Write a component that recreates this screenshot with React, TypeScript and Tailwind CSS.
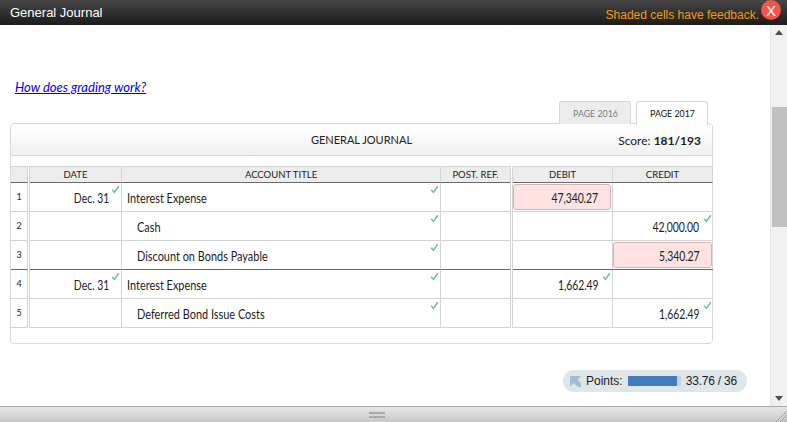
import React from "react";

type Row = {
  num: number;
  date?: string;
  account: string;
  indent?: boolean;
  debit?: string;
  credit?: string;
  shaded?: "debit" | "credit";
  debitCheck?: boolean;
  creditCheck?: boolean;
  divider?: boolean;
};

const rows: Row[] = [
  { num: 1, date: "Dec. 31", account: "Interest Expense", debit: "47,340.27", shaded: "debit" },
  { num: 2, account: "Cash", indent: true, credit: "42,000.00", creditCheck: true },
  { num: 3, account: "Discount on Bonds Payable", indent: true, credit: "5,340.27", shaded: "credit", divider: true },
  { num: 4, date: "Dec. 31", account: "Interest Expense", debit: "1,662.49", debitCheck: true },
  { num: 5, account: "Deferred Bond Issue Costs", indent: true, credit: "1,662.49", creditCheck: true },
];

const gridCols = "grid grid-cols-[17px_2px_92px_319px_70px_2px_100px_100px]";

const Check = () => (
  <svg className="absolute top-[2px] right-[1px]" width="9" height="9" viewBox="0 0 9 9" fill="none">
    <path d="M1.2 4.8 L3.4 7.4 L7.8 1.2" stroke="#62c0a0" strokeWidth="1.5" />
  </svg>
);

const HeadCell = ({ children }: { children?: React.ReactNode }) => (
  <div className="h-[17px] bg-[#ececec] border-t border-r border-[#d4d4d4] border-b border-b-[#6b6b6b] flex items-center justify-center text-[9.5px] leading-none text-[#222]">
    {children}
  </div>
);

const MoneyCell = ({ value, shaded, check, last }: { value?: string; shaded?: boolean; check?: boolean; last?: boolean }) => (
  <div className={`relative pr-[14px] flex items-center justify-end pt-[3px] ${last ? "" : "border-r border-[#d4d4d4]"}`}>
    {shaded && <div className="absolute left-0 right-[1px] top-[1px] bottom-[1px] rounded-[3px] bg-[#ffe3e3] border border-[#d3b3b3]" />}
    <span className="relative inline-block origin-right scale-x-[0.8] tracking-[-0.1px]">{value}</span>
    {check && <Check />}
  </div>
);

const JournalRow = ({ row }: { row: Row }) => {
  const line = row.divider ? "border-b-[#6b6b6b]" : "border-b-[#d4d4d4]";
  const cell = `h-[29px] border-b ${line}`;
  return (
    <div className={`${gridCols} text-[13px] text-[#1c1c1c]`}>
      <div className={`${cell} border-r border-r-[#d4d4d4] flex items-center justify-center text-[9px] text-[#222]`}>{row.num}</div>
      <div className="border-r border-r-[#d4d4d4]" />
      <div className={`${cell} relative border-r border-r-[#d4d4d4] pr-[12px] pt-[3px] flex items-center justify-end`}>
        <span className="inline-block origin-right scale-x-[0.8]">{row.date}</span>
        {row.date && <Check />}
      </div>
      <div className={`${cell} relative border-r border-r-[#d4d4d4] pt-[3px] flex items-center ${row.indent ? "pl-[15px]" : "pl-[5px]"}`}>
        <span className="inline-block origin-left scale-x-[0.84]">{row.account}</span>
        <Check />
      </div>
      <div className={`${cell} border-r border-r-[#d4d4d4]`} />
      <div className="border-r border-r-[#d4d4d4]" />
      <div className={cell + " grid"}>
        <MoneyCell value={row.debit} shaded={row.shaded === "debit"} check={row.debitCheck} />
      </div>
      <div className={cell + " grid"}>
        <MoneyCell value={row.credit} shaded={row.shaded === "credit"} check={row.creditCheck} last />
      </div>
    </div>
  );
};

export default function App() {
  return (
    <div className="w-[787px] h-[422px] flex flex-col overflow-hidden bg-white font-['Lato','Liberation_Sans',sans-serif]">
      {/* title bar */}
      <div className="h-[25px] relative flex items-center justify-between pl-[10px] pr-[28px] bg-gradient-to-b from-[#474747] to-[#1c1c1c] font-['Liberation_Sans',sans-serif]">
        <span className="text-[13px] text-white">General Journal</span>
        <span className="text-[12px] text-[#f39c12] pt-[5px]">Shaded cells have feedback.</span>
        <div className="absolute right-[6px] top-0 w-[20px] h-[20px] rounded-full bg-[#f0564a] flex items-center justify-center text-[15px] leading-none text-white">
          X
        </div>
      </div>

      <div className="flex-1 flex min-h-0">
        <div className="flex-1 pl-[10px] pr-[57px] pt-[54px] border-r border-[#e6e6e6]">
          <a href="#" className="block ml-[5px] h-[16px] text-[13px] leading-[16px] italic text-[#0000ee] underline">
            How does grading work?
          </a>
          {/* tabs */}
          <div className="flex justify-end gap-[5px] mt-[6px] pr-[5px] h-[23px] text-[10px]">
            <div className="w-[72px] h-[23px] flex items-center justify-center rounded-t-[3px] border border-b-0 border-[#d6d6d6] bg-[#ececec] text-[#7d7d7d]">
              <span className="inline-block scale-x-[0.88]">PAGE 2016</span>
            </div>
            <div className="w-[72px] h-[24px] flex items-center justify-center rounded-t-[3px] border border-b-0 border-[#d6d6d6] bg-white text-[#111] relative z-10">
              <span className="inline-block scale-x-[0.88]">PAGE 2017</span>
            </div>
          </div>
          {/* journal card */}
          <div className="h-[221px] w-[703px] -mt-[1px] rounded-[4px] border border-[#d8d8d8] bg-white">
            <div className="relative h-[32px] pt-[2px] flex items-center justify-center rounded-t-[4px] border-b border-[#d8d8d8] bg-gradient-to-b from-white to-[#f1f1f1] text-[11px] text-[#222]">
              GENERAL JOURNAL
              <span className="absolute right-[11px] text-[12px] text-[#222]">
                Score: <span className="font-bold">181/193</span>
              </span>
            </div>
            <div className="h-[10px]" />
            <div className={gridCols}>
              <HeadCell />
              <div className="h-[17px] border-r border-[#d4d4d4]" />
              <HeadCell>DATE</HeadCell>
              <HeadCell>ACCOUNT TITLE</HeadCell>
              <HeadCell>POST. REF.</HeadCell>
              <div className="h-[17px] border-r border-[#d4d4d4]" />
              <HeadCell>DEBIT</HeadCell>
              <HeadCell>CREDIT</HeadCell>
            </div>
            {rows.map((row) => (
              <JournalRow key={row.num} row={row} />
            ))}
          </div>
          {/* points */}
          <div className="flex justify-end mt-[26px] -mr-[34px]">
            <div className="w-[184px] h-[22px] rounded-[11px] bg-[#dfe6ea] flex items-center pl-[7px] text-[12px] text-[#1c1c1c] font-['Liberation_Sans',sans-serif]">
              <svg width="11" height="11" viewBox="0 0 11 11" className="mr-[5px] mt-[1px]">
                <path d="M0 0H11L7.5 3.5L11 7.5V11H8L3.5 7L0 11Z" fill="#9dbdd2" />
              </svg>
              <span>Points:</span>
              <div className="ml-[5px] w-[53px] h-[10px] bg-[#c3d2de]">
                <div className="h-full bg-[#3f7dbc] rounded-[1px]" style={{ width: `${(33.76 / 36) * 100 - 1}%` }} />
              </div>
              <span className="ml-[5px] tracking-[-0.2px]">33.76 / 36</span>
            </div>
          </div>
        </div>
        {/* scrollbar */}
        <div className="w-[17px] bg-[#f1f1f1] flex flex-col items-center justify-between py-[5px] relative">
          <svg width="8" height="5" viewBox="0 0 8 5"><path d="M0 5L4 0L8 5Z" fill="#505050" /></svg>
          <div className="absolute top-[82px] left-[1px] w-[15px] h-[120px] bg-[#c1c1c1]" />
          <svg width="8" height="5" viewBox="0 0 8 5"><path d="M0 0L4 5L8 0Z" fill="#505050" /></svg>
        </div>
      </div>

      {/* resize footer */}
      <div className="h-[16px] relative flex flex-col items-center justify-center gap-[2px] pr-[34px] border-t border-[#a8a8a8] bg-gradient-to-b from-[#e6e6e6] to-[#c8c8c8]">
        <div className="w-[16px] h-[2px] bg-[#a9a9a9]" />
        <div className="w-[16px] h-[2px] bg-[#a9a9a9]" />
        <svg className="absolute right-0 bottom-0" width="12" height="12" viewBox="0 0 12 12" fill="none">
          <path d="M12 1L1 12M12 5L5 12M12 9L9 12" stroke="#a0a0a0" />
        </svg>
      </div>
    </div>
  );
}
